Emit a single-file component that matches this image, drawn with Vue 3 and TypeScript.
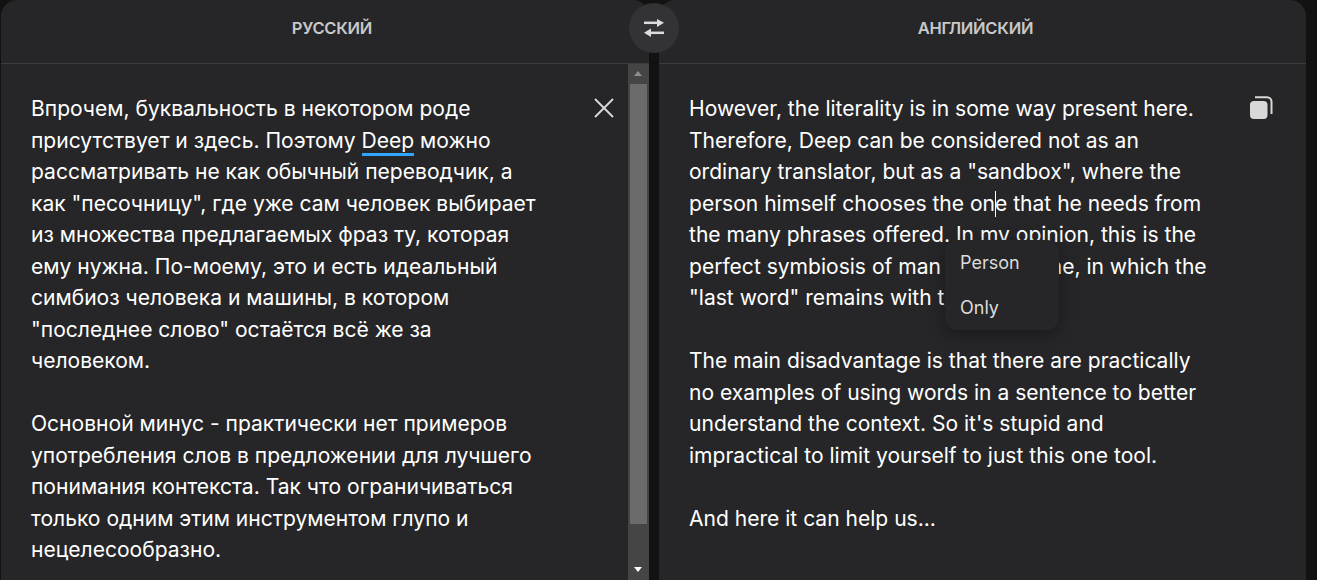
<script setup lang="ts">
const sourceParagraphs = [
  ['Впрочем, буквальность в некотором роде', 'присутствует и здесь. Поэтому |Deep| можно', 'рассматривать не как обычный переводчик, а', 'как "песочницу", где уже сам человек выбирает', 'из множества предлагаемых фраз ту, которая', 'ему нужна. По-моему, это и есть идеальный', 'симбиоз человека и машины, в котором', '"последнее слово" остаётся всё же за', 'человеком.'],
  ['Основной минус - практически нет примеров', 'употребления слов в предложении для лучшего', 'понимания контекста. Так что ограничиваться', 'только одним этим инструментом глупо и', 'нецелесообразно.'],
]
const targetParagraphs = [
  ['However, the literality is in some way present here.', 'Therefore, Deep can be considered not as an', 'ordinary translator, but as a "sandbox", where the', 'person himself chooses the on|e that he needs from', 'the many phrases offered. In my opinion, this is the', 'perfect symbiosis of man and machine, in which the', '"last word" remains with the person.'],
  ['The main disadvantage is that there are practically', 'no examples of using words in a sentence to better', 'understand the context. So it\'s stupid and', 'impractical to limit yourself to just this one tool.'],
  ['And here it can help us...'],
]
</script>

<template>
  <div class="page">
    <section class="panel">
      <header class="head left">РУССКИЙ</header>
      <div class="body source">
        <div class="text">
          <p v-for="(para, i) in sourceParagraphs" :key="i">
            <span v-for="line in para" :key="line" class="line">
              <template v-for="(part, j) in line.split('|')" :key="j">
                <span v-if="j === 1" class="mark">{{ part }}</span>
                <template v-else>{{ part }}</template>
              </template>
            </span>
          </p>
        </div>
        <svg class="close" width="22" height="22" viewBox="0 0 22 22">
          <path d="M2 2 20 20M20 2 2 20" stroke="#d6d6d6" stroke-width="2" fill="none" />
        </svg>
        <div class="scrollbar">
          <div class="arrow up"></div>
          <div class="thumb"></div>
          <div class="arrow down"></div>
        </div>
      </div>
    </section>

    <section class="panel">
      <header class="head right">АНГЛИЙСКИЙ</header>
      <div class="body target">
        <div class="text">
          <p v-for="(para, i) in targetParagraphs" :key="i">
            <span v-for="line in para" :key="line" class="line">
              <template v-for="(part, j) in line.split('|')" :key="j">
                <span v-if="j === 1" class="caret"></span>{{ part }}
              </template>
            </span>
          </p>
        </div>
        <svg class="copy" width="24" height="24" viewBox="0 0 24 24">
          <rect x="0" y="5" width="17.500" height="18" rx="4" fill="#d8d8d8" />
          <path d="M5 1.200h12a4.500 4.500 0 0 1 4.500 4.500V18" stroke="#d8d8d8" stroke-width="2" fill="none" />
        </svg>
        <div class="popup">
          <div class="option">Person</div>
          <div class="option">Only</div>
        </div>
      </div>
    </section>

    <button class="swap">
      <svg width="22" height="18" viewBox="0 0 22 18">
        <path d="M1 3.800h15" stroke="#dcdcdc" stroke-width="2.500" />
        <path d="M14 0 21 3.800 14 8z" fill="#dcdcdc" />
        <path d="M21 13.800H6" stroke="#dcdcdc" stroke-width="2.500" />
        <path d="M8 9.600 1 13.800 8 18z" fill="#dcdcdc" />
      </svg>
    </button>
  </div>
</template>

<style>
html, body {
  margin: 0;
  background: #121213;
  overflow: hidden;
}
</style>

<style scoped>
.page {
  position: relative;
  display: flex;
  gap: 10px;
  width: 1317px;
  height: 580px;
  padding: 0 11px 0 1px;
  box-sizing: border-box;
  background: #121213;
  overflow: hidden;
  font-family: Inter, "Noto Sans", sans-serif;
  color: #fff;
}

.panel {
  flex: 0 0 648px;
  display: flex;
  flex-direction: column;
  background: #262628;
  border-radius: 16px 16px 0 0;
}
.panel + .panel {
  flex-basis: 647px;
}

.head {
  height: 55px;
  padding-bottom: 8px;
  flex: none;
  display: flex;
  align-items: center;
  justify-content: center;
  border-bottom: 1px solid #3c3c3e;
  font-size: 16.500px;
  font-weight: 600;
  letter-spacing: -0.250px;
  color: #c8c8c8;
}
.head.left {
  padding-left: 14px;
}
.head.right {
  padding-right: 14px;
}

.body {
  position: relative;
  flex: 1;
  min-height: 0;
}

.text {
  padding: 29px 30px 0;
  font-size: 21.050px;
  line-height: 31.500px;
  white-space: nowrap;
}
p {
  margin: 0 0 31.500px;
}
.line {
  display: block;
}
.mark {
  display: inline-block;
  line-height: 24px;
  border-bottom: 3px solid #2ea6ff;
}
.caret {
  display: inline-block;
  width: 1px;
  height: 26px;
  margin-right: -1px;
  vertical-align: -6px;
  background: #fff;
}

.close {
  position: absolute;
  top: 33px;
  right: 34px;
}

.scrollbar {
  position: absolute;
  top: 0;
  right: 0;
  bottom: 0;
  width: 21px;
  display: flex;
  flex-direction: column;
  align-items: center;
  background: #454545;
}
.thumb {
  width: 17px;
  height: 440px;
  background: #6b6b6b;
}
.arrow {
  flex: none;
  height: 20px;
  width: 100%;
  position: relative;
}
.arrow::after {
  content: "";
  position: absolute;
  left: 6px;
  top: 7px;
  border-left: 4.500px solid transparent;
  border-right: 4.500px solid transparent;
}
.arrow.up::after {
  border-bottom: 5px solid #8f8f8f;
}
.arrow.down {
  margin-top: auto;
}
.arrow.down::after {
  border-top: 5px solid #fff;
}

.copy {
  position: absolute;
  top: 32px;
  right: 32px;
}

.popup {
  position: absolute;
  left: 286px;
  top: 176px;
  width: 114px;
  height: 90px;
  padding: 0 15px;
  box-sizing: border-box;
  background: #262628;
  border-radius: 12px;
  box-shadow: 0 4px 16px rgba(0, 0, 0, 0.35);
  font-size: 18px;
  color: #dcdcdc;
}
.option {
  height: 45px;
  line-height: 45px;
}

.swap {
  position: absolute;
  left: 629px;
  top: 3px;
  width: 50px;
  height: 50px;
  padding: 0;
  border: 0;
  border-radius: 50%;
  background: #333335;
  display: flex;
  align-items: center;
  justify-content: center;
}
</style>
